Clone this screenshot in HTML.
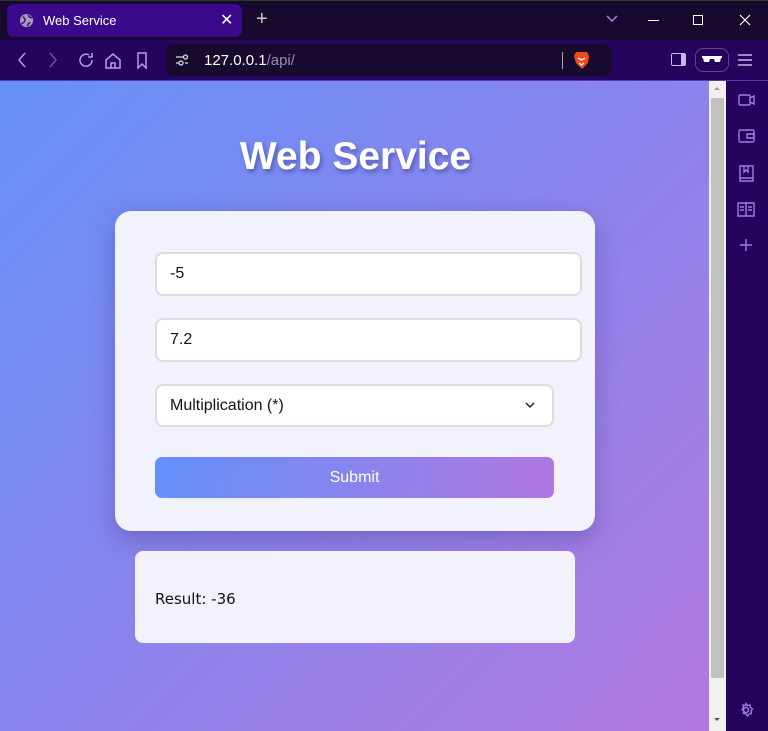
<!DOCTYPE html>
<html><head><meta charset="utf-8"><style>
*{box-sizing:border-box;margin:0;padding:0}
body{width:768px;height:731px;overflow:hidden;background:#170a2e;font-family:"Liberation Sans",sans-serif;position:relative}
.abs{position:absolute}
.tabbar{left:0;top:0;width:768px;height:40px;background:#170a2e;border-top:1px solid #2a3a2a}
.tab{left:7px;top:4px;width:235px;height:33px;background:#3b0a8c;border-radius:7px;color:#fff;font-size:13px}
.toolbar{left:0;top:40px;width:768px;height:41px;background:#25045e;border-bottom:1px solid #5a3aa0}
.url{left:166px;top:44px;width:446px;height:32px;background:#170a2e;border-radius:8px}
.page{left:0;top:81px;width:709px;height:650px;background:linear-gradient(135deg,#6590f9 0%,#8a84ec 50%,#b27ae0 100%)}
.scroll{left:709px;top:81px;width:17px;height:650px;background:#f0f0f0}
.side{left:726px;top:81px;width:42px;height:650px;background:#25045e}
.card{left:115px;top:211px;width:480px;height:320px;background:#f2f2fc;border-radius:16px;box-shadow:0 8px 24px rgba(60,40,120,.35)}
.inp{background:#fff;border:2px solid #ddd;border-radius:8px;font-size:16px;color:#111;padding-left:13px;display:flex;align-items:center}
.btn{left:155px;top:457px;width:399px;height:41px;border-radius:7px;background:linear-gradient(100deg,#6390fa,#b077e0);color:#fff;font-size:16px;display:flex;align-items:center;justify-content:center}
.res{left:135px;top:551px;width:440px;height:92px;background:#f3f2fc;border-radius:8px;font-family:"DejaVu Sans",sans-serif;font-size:15px;color:#111;padding:39px 0 0 20px}
svg{position:absolute}
</style></head><body>
<div class="abs tabbar"></div>
<div class="abs tab">
<svg style="left:12px;top:9px" width="15" height="15" viewBox="0 0 16 16"><circle cx="8" cy="8" r="7" fill="#a79bb8"/><path d="M4 4c2 1 3 3 2 5s-3 1-3 3M10 2c0 2 2 3 4 3M9 14c0-2 1-3 3-4" stroke="#3b0a8c" stroke-width="1.6" fill="none"/></svg>
<span class="abs" style="left:36px;top:9px">Web Service</span>
<span class="abs" style="left:213px;top:6px;font-size:16px">✕</span>
</div>
<span class="abs" style="left:256px;top:8px;color:#ccc;font-size:20px">+</span>
<svg style="left:606px;top:15px" width="12" height="8"><path d="M1 1l5 5 5-5" stroke="#a08ad0" stroke-width="1.5" fill="none"/></svg>
<div class="abs" style="left:648px;top:20px;width:11px;height:1px;background:#fff"></div>
<div class="abs" style="left:693px;top:15px;width:10px;height:10px;border:1px solid #fff"></div>
<svg style="left:739px;top:14px" width="12" height="12"><path d="M1 1l10 10M11 1L1 11" stroke="#fff" stroke-width="1.2"/></svg>
<div class="abs toolbar"></div>
<svg style="left:14px;top:50px" width="150" height="20" fill="none" stroke="#b59ee8" stroke-width="1.5">
<path d="M11 3l-6 7 6 7"/><path d="M36 3l6 7-6 7" stroke="#6a52a0"/>
<path d="M75 5a6 6 0 1 0 3 5" /><path d="M78 3v4h-4"/>
<path d="M92 10l7-6 7 6v8h-14z M97 18v-5h4v5"/>
<path d="M124 3h8v15l-4-4-4 4z"/>
</svg>
<div class="abs url"></div>
<svg style="left:175px;top:53px" width="14" height="14" fill="none" stroke="#ddd" stroke-width="1.3"><path d="M1 4h7M1 10h3M10 10h3"/><circle cx="10.5" cy="4" r="2"/><circle cx="6" cy="10" r="2"/></svg>
<span class="abs" style="left:204px;top:52px;color:#fff;font-size:15px">127.0.0.1<span style="color:#9a8ab8">/api/</span></span>
<div class="abs" style="left:562px;top:52px;width:1px;height:17px;background:#aaa"></div>
<svg style="left:573px;top:51px" width="17" height="19" viewBox="0 0 17 19"><path d="M3 1h11l2 4-1 7-6 6-6-6-2-7z" fill="#f04a1a"/><path d="M5 7l3.5 2 3.5-2M6 12l2.5 2 2.5-2" stroke="#fff" stroke-width="1.3" fill="none"/></svg>
<div class="abs" style="left:671px;top:53px;width:15px;height:13px;border:1.5px solid #c8b6f0;border-right-width:5px;border-radius:2px"></div>
<div class="abs" style="left:695px;top:48px;width:34px;height:24px;border:1px solid #5e4494;border-radius:8px"></div>
<svg style="left:702px;top:55px" width="20" height="8"><path d="M0 1h20v2h-1l-1 4h-5l-1-3h-4l-1 3H2L1 3H0z" fill="#fff"/></svg>
<svg style="left:737px;top:53px" width="16" height="14" stroke="#c8b6f0" stroke-width="1.5"><path d="M1 2h14M1 7h14M1 12h14"/></svg>
<div class="abs page"></div>
<div class="abs scroll"><div class="abs" style="left:2px;top:17px;width:13px;height:580px;background:#c1c1c1"></div>
<div class="abs" style="left:5px;top:6px;width:0;height:0;border:3.5px solid transparent;border-bottom-color:#999;border-top:0"></div>
<div class="abs" style="left:5px;top:637px;width:0;height:0;border:3.5px solid transparent;border-top-color:#555;border-bottom:0"></div></div>
<div class="abs side"></div>
<svg style="left:737px;top:92px" width="20" height="170" fill="none" stroke="#9d7fe0" stroke-width="1.4">
<rect x="2" y="3" width="11" height="10" rx="1"/><path d="M13 6l4-2v8l-4-2"/>
<rect x="2" y="38" width="15" height="12" rx="1.5"/><path d="M10 42h7v4h-7z"/>
<path d="M3 74h13v15H3z M3 86h13 M7 74v6l2-2 2 2v-6"/>
<path d="M1 111h8v13H1z M9 111h8v13H9z M3 115h4M3 118h4M11 115h4M11 118h4"/>
<path d="M9 147v12M3 153h12"/>
</svg>
<svg style="left:738px;top:702px" width="16" height="16" fill="none" stroke="#9d7fe0" stroke-width="1.4"><circle cx="8" cy="8" r="2.5"/><path d="M8 1.5l1.5 2 2.5-.5.5 2.5 2 1.5-1.5 2 .5 2.5-2.5.5-1.5 2-1.5-2-2.5-.5.5-2.5-2-1.5 1.5-2-.5-2.5 2.5.5z"/></svg>

<div class="abs" style="left:0;top:135px;width:711px;text-align:center;color:#fff;font-weight:bold;font-size:39px;text-shadow:2px 3px 4px rgba(40,30,100,.4)">Web Service</div>
<div class="abs card"></div>
<div class="abs inp" style="left:155px;top:252px;width:427px;height:44px">-5</div>
<div class="abs inp" style="left:155px;top:318px;width:427px;height:44px">7.2</div>
<div class="abs inp" style="left:155px;top:384px;width:399px;height:43px">Multiplication (*)
<svg style="left:368px;top:16px" width="10" height="7"><path d="M1 1l4 4 4-4" stroke="#222" stroke-width="1.5" fill="none"/></svg></div>
<div class="abs btn">Submit</div>
<div class="abs res">Result: -36</div>
</body></html>
